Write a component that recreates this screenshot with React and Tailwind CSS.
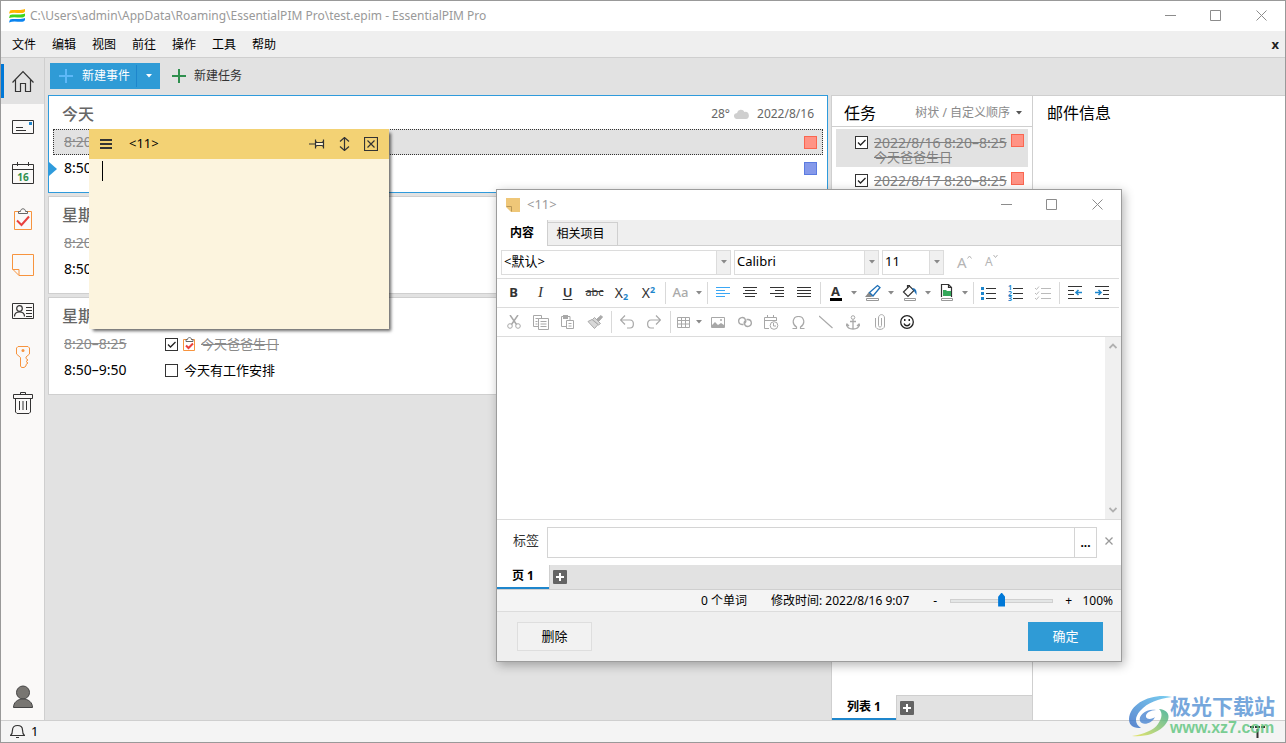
import { useState } from 'react'

const days = [
  { title: '今天', today: true },
  { title: '星期三' },
  { title: '星期四' }
]

const menuItems = ['文件', '编辑', '视图', '前往', '操作', '工具', '帮助']

const tasks = [
  { id: 1, time: '2022/8/16 8:20–8:25', title: '今天爸爸生日', selected: true },
  { id: 2, time: '2022/8/17 8:20–8:25', title: '今天爸爸生日' },
  { id: 3, time: '2022/8/18 8:20–8:25', title: '今天爸爸生日' }
]

function Svg({ w = 16, h = w, children, className = '' }) {
  return (
    <svg width={w} height={h} viewBox={`0 0 ${w} ${h}`} fill="none" stroke="currentColor" className={`shrink-0 ${className}`} aria-hidden="true">
      {children}
    </svg>
  )
}

const Caret = ({ className = 'text-[#8a8a8a]' }) => (
  <Svg w={6} h={4} className={className}>
    <path d="M0 0h6L3 3.5z" fill="currentColor" stroke="none" />
  </Svg>
)

const AppLogo = () => (
  <Svg w={16} h={14}>
    <g stroke="none">
      <path d="M1 1.5C5 0 11 2 16 0v2.5c-1 1.5-2 1.5-4 1.5C8 4 4 3 0 4.500z" fill="#ffb400" />
      <path d="M1 6C5 4.500 11 6.500 16 4.500V7c-1 1.5-2 1.5-4 1.5C8 8.500 4 7.500 0 9z" fill="#3fd51f" />
      <path d="M1 10.500C5 9 11 11 16 9v2c-1 1.5-2 1.800-4 1.800-4 0-8-1-12 .7z" fill="#0a84f0" />
    </g>
  </Svg>
)

/* ---------- sidebar icons ---------- */

const HomeIcon = () => (
  <Svg w={22} className="text-[#333]">
    <path d="M.5 12.500 11 1.5l10.500 11M3.500 10v11.500h5v-8h5v8h5V10" strokeWidth="1.200" />
  </Svg>
)
const MailIcon = () => (
  <Svg w={22} className="text-[#333]">
    <path d="M.5 4.500h21v13H.5zM4 11.500h7M4 14.500h10" />
    <path d="M17 6h3v3h-3z" fill="#1e86cc" stroke="none" />
  </Svg>
)
const CalendarIcon = () => (
  <Svg w={22} h={24} className="text-[#333]">
    <path d="M.5 3.500h21v19H.5zM.5 8.500h21M5.500 1v4M16.500 1v4" />
    <text x="11" y="19.500" textAnchor="middle" fontSize="10" fontWeight="700" fill="#2f8f4e" stroke="none">16</text>
  </Svg>
)
const ClipIcon = () => (
  <Svg w={22} h={24}>
    <path d="M7 4.500H2.500v18h17v-18H15" stroke="#f7943e" />
    <path d="M6.500 6.500v-2h2c0-3.600 5-3.600 5 0h2v2z" stroke="#666" />
    <path d="m5 13.500 4.500 4.500L17 9.500" stroke="#e8403e" strokeWidth="2" />
  </Svg>
)
const NoteIcon = () => (
  <Svg w={22} className="text-[#f7943e]">
    <path d="M.5.5h21v21H7l-6.500-6.500zM.5 15.500H7v6" />
  </Svg>
)
const ContactIcon = () => (
  <Svg w={22} className="text-[#333]">
    <path d="M.5 3.500h21v15H.5zM14 7.500h6M14 10.500h6M14 13.500h6M14 16.500h6" />
    <circle cx="7.500" cy="8.500" r="2.800" strokeWidth="1.200" />
    <path d="M2.500 16.500c0-3 2-4.500 5-4.500s5 1.5 5 4.500" strokeWidth="1.200" />
  </Svg>
)
const KeyIcon = () => (
  <Svg w={22} h={24} className="text-[#f7943e]">
    <path d="M6 1.500h10l1.500 1.500v6l-3.500 3v1.500l2 1.500-2 1.500 2 1.500-2 1.500v1.500l-2 1.500H9.500l-1-1.500V12.500l-4-3.500v-6z" />
    <circle cx="11" cy="5.500" r="1.500" fill="currentColor" stroke="none" />
  </Svg>
)
const TrashIcon = () => (
  <Svg w={22} h={24} className="text-[#333]">
    <path d="M1.500 3.500h19v4h-19zM8.500 3V1.500h5V3M3.500 8v13l1.500 1.500h12l1.500-1.500V8M7.500 10v9M11 10v9M14.500 10v9" />
  </Svg>
)
const UserIcon = () => (
  <Svg w={22} h={24}>
    <circle cx="11" cy="7.500" r="6.500" fill="#787672" stroke="#444" />
    <path d="M1.500 22.500c0-5 4-8.500 9.500-8.500s9.500 3.500 9.500 8.500z" fill="#787672" stroke="#444" />
  </Svg>
)

const sections = [
  { label: '今天', Icon: HomeIcon },
  { label: '邮件', Icon: MailIcon },
  { label: '日历', Icon: CalendarIcon },
  { label: '任务', Icon: ClipIcon },
  { label: '便笺', Icon: NoteIcon },
  { label: '联系人', Icon: ContactIcon },
  { label: '密码', Icon: KeyIcon },
  { label: '回收站', Icon: TrashIcon }
]

function Sidebar() {
  return (
    <nav className="flex w-11 shrink-0 flex-col border-r border-[#cfcfcf] bg-[#faf9f8]">
      {sections.map(({ label, Icon }, i) => (
        <button key={label} aria-label={label} className={`flex h-[46px] items-center gap-2 ${i === 0 ? 'bg-[#e2e2e2]' : ''}`}>
          <span className={`h-[34px] w-[3px] ${i === 0 ? 'bg-[#0078d7]' : ''}`} />
          <Icon />
        </button>
      ))}
      <button aria-label="帐户" className="mt-auto flex h-[46px] items-center pl-[11px]">
        <UserIcon />
      </button>
    </nav>
  )
}

/* ---------- shared bits ---------- */

function WindowButtons() {
  return (
    <div className="ml-auto flex h-full items-center pb-0.5 text-[#8c8c8c]">
      <button aria-label="最小化" className="flex w-[45px] justify-center"><Svg w={11}><path d="M0 5.500h11" /></Svg></button>
      <button aria-label="最大化" className="flex w-[45px] justify-center"><Svg w={11}><path d="M.5.5h10v10H.5z" /></Svg></button>
      <button aria-label="关闭" className="flex w-[47px] justify-center"><Svg w={11}><path d="m.5.5 10 10M10.500.5l-10 10" /></Svg></button>
    </div>
  )
}

function Check({ label, checked }) {
  const [on, setOn] = useState(Boolean(checked))
  return (
    <span className="relative flex size-[13px] shrink-0">
      <input
        type="checkbox"
        aria-label={label}
        checked={on}
        onChange={() => setOn(!on)}
        className="size-[13px] appearance-none border border-[#333] bg-white"
      />
      {on && (
        <Svg w={13} className="pointer-events-none absolute inset-0 text-[#222]">
          <path d="m3 6.500 2.500 2.500L10.500 4" strokeWidth="1.300" />
        </Svg>
      )}
    </span>
  )
}

function AddTab({ label }) {
  return (
    <button aria-label={label} className="flex size-[14px] items-center justify-center rounded-[1px] bg-[#646464] text-white">
      <Svg w={8}><path d="M4 0v8M0 4h8" strokeWidth="2" /></Svg>
    </button>
  )
}

/* ---------- agenda ---------- */

function DayCard({ title, today }) {
  return (
    <article className={`relative border bg-white pb-[11px] ${today ? 'border-[#2f9bdc]' : 'border-[#cfcfcf]'}`}>
      {today && (
        <Svg w={9} h={14} className="absolute top-[66px] left-0 text-[#2f9bdc]"><path d="M0 0v14l8-7z" fill="currentColor" stroke="none" /></Svg>
      )}
      <header className="flex h-[33px] items-center justify-between px-[13px] pt-[3px] text-xs text-[#666]">
        <h2 className="text-base font-medium">{title}</h2>
        {today && (
          <p className="flex items-center gap-1">
            28°
            <Svg w={15} h={10} className="text-[#cfcfcf]">
              <path d="M4 10a3.500 3 0 0 1-1-6 4 4 0 0 1 7.500-1A3.500 3.500 0 0 1 12 10z" fill="currentColor" stroke="none" />
            </Svg>
            <span className="ml-1">2022/8/16</span>
          </p>
        )}
      </header>
      <ul className="px-1 text-[13px] leading-[26px]">
        <li className={`flex h-[26px] items-center pl-[11px] text-[#8a8a8a] ${today ? 'bg-[#e2e2e2] outline-1 -outline-offset-1 outline-dotted outline-[#333]' : ''}`}>
          <time className="w-[101px] text-sm line-through">8:20–8:25</time>
          <Check label="今天爸爸生日" checked />
          <Svg w={13} h={15} className="mx-[5px]">
            <path d="M4 2.500H.5v11h11v-11H8" stroke="#f7943e" />
            <path d="M3 4.500v-2h1.500c0-2.600 4-2.600 4 0H10v2z" stroke="#666" />
            <path d="m3 8.500 2.500 2.500L10 6.500" stroke="#e8403e" strokeWidth="2" />
          </Svg>
          <span className="line-through">今天爸爸生日</span>
          {today && <span className="mr-1.5 ml-auto size-[13px] border border-[#fa6650] bg-[#ff9385]" />}
        </li>
        <li className="flex h-[26px] items-center pl-[11px] text-black">
          <time className="w-[101px] text-sm">8:50–9:50</time>
          <Check label="今天有工作安排" />
          <span className="ml-1.5">今天有工作安排</span>
          {today && <span className="mr-1.5 ml-auto size-[13px] border border-[#5b7be0] bg-[#8599ea]" />}
        </li>
      </ul>
    </article>
  )
}

/* ---------- tasks ---------- */

function TasksPanel() {
  return (
    <section className="flex w-[202px] shrink-0 flex-col overflow-hidden border-x border-t border-[#cfcfcf] bg-white">
      <header className="flex h-[31px] shrink-0 items-center justify-between border-b border-[#cfcfcf] pt-1 pr-[10px] pl-3">
        <h2 className="text-base">任务</h2>
        <button className="flex items-center gap-1.5 text-xs text-[#8a8a8a]">
          树状 / 自定义顺序 <Caret className="text-[#555]" />
        </button>
      </header>
      <ul className="min-h-0 flex-1 overflow-hidden px-1 pt-0.5 text-[#808080]">
        {tasks.map((t) => (
          <li key={t.id} className={`flex h-[38px] gap-1.5 pt-[7px] pr-1 pl-[19px] ${t.selected ? 'bg-[#e2e2e2]' : ''}`}>
            <Check label={`${t.time} ${t.title}`} checked />
            <div className="-mt-px flex-1 text-[13px] leading-[15px] whitespace-nowrap line-through">
              <p className="text-sm leading-[15px]">{t.time}</p>
              <p>{t.title}</p>
            </div>
            <span className="-mt-0.5 mr-0.5 -ml-0.5 size-[13px] shrink-0 border border-[#fa6650] bg-[#ff9385]" />
          </li>
        ))}
      </ul>
      <footer className="flex h-[25px] shrink-0 bg-[#e2e2e2]">
        <button className="h-full w-16 border-b-2 border-[#1e86cc] bg-white text-xs font-bold">列表 1</button>
        <div className="flex flex-1 items-center border-t border-l border-[#cfcfcf] pl-[3px]">
          <AddTab label="新建列表" />
        </div>
      </footer>
    </section>
  )
}

/* ---------- sticky note ---------- */

function StickyNote() {
  return (
    <section className="absolute top-32 left-[88px] flex h-[200px] w-[300px] flex-col bg-[#fcf4de] shadow-[3px_3px_3px_-1px_rgba(0,0,0,0.6)]">
      <header className="flex h-[30px] shrink-0 items-center bg-[#f3d274] px-[11px] text-[#333]">
        <button aria-label="菜单"><Svg w={12}><path d="M0 2h12M0 6h12M0 10h12" strokeWidth="2" /></Svg></button>
        <h3 className="ml-[17px] text-[13px] text-black">&lt;11&gt;</h3>
        <div className="ml-auto flex items-center gap-[14px]">
          <button aria-label="固定">
            <Svg w={16} h={14}><path d="M7 5.500h7v3H7z" fill="#fff3cf" stroke="none" /><path d="M0 7h6M6.500 2.500v9M14.500 2.500v9M6.500 4.500 8 5.500h5l1.500-1M6.500 9.500 8 8.500h5l1.500 1" strokeWidth="1.200" /></Svg>
          </button>
          <button aria-label="展开">
            <Svg w={11} h={14}><path d="M5.500 1v12M1 4.500l4.500-4 4.500 4M1 9.500l4.500 4 4.500-4" strokeWidth="1.200" /></Svg>
          </button>
          <button aria-label="关闭">
            <Svg w={14}><path d="M.5.5h13v13H.5zM3.500 3.500l7 7M10.500 3.500l-7 7" strokeWidth="1.200" /></Svg>
          </button>
        </div>
      </header>
      <div className="relative flex-1">
        <textarea aria-label="便笺内容" className="block size-full resize-none bg-transparent p-3 outline-none" />
        <span className="absolute top-0.5 left-[13px] h-5 w-px bg-black" />
      </div>
    </section>
  )
}

/* ---------- note editor window ---------- */

function Tool({ label, className = '', children }) {
  return (
    <button aria-label={label} className={`flex h-full w-[27px] items-center justify-center ${className}`}>
      {children}
    </button>
  )
}

const More = () => (
  <button aria-label="更多" className="flex h-full w-[10px] items-center justify-center"><Caret /></button>
)

const Sep = () => <span className="mr-px ml-[3px] h-[22px] w-px bg-[#d9d9d9]" />

function Combo({ label, value, className }) {
  return (
    <div className={`flex h-[25px] border border-[#dcdcdc] ${className}`}>
      <select aria-label={label} className="min-w-0 flex-1 appearance-none bg-white pl-0.5 text-[13px] text-black outline-none">
        <option>{value}</option>
      </select>
      <span className="flex w-[14px] items-center justify-center border-l border-[#dcdcdc] bg-[#f0f0f0]"><Caret /></span>
    </div>
  )
}

const Lines = ({ rows, className = 'text-[#333]' }) => (
  <Svg w={14} h={11} className={className}>
    {rows.map(([a, b], i) => <path key={i} d={`M${a} ${i * 3 + 0.5}H${b}`} />)}
  </Svg>
)

function FormatRow() {
  return (
    <div className="mr-0.5 flex h-[29px] items-center border-b border-[#dcdcdc] pb-px pl-[3px] text-[#333]">
      <Tool label="粗体"><b className="text-[13px]">B</b></Tool>
      <Tool label="斜体"><i className="font-['Liberation_Serif',serif] text-[15px]">I</i></Tool>
      <Tool label="下划线"><span className="text-[13px] font-semibold underline underline-offset-2">U</span></Tool>
      <Tool label="删除线"><span className="text-[11px] line-through">abc</span></Tool>
      <Tool label="下标"><span className="text-sm">X<sub className="text-[9px] font-bold text-[#1e86cc]">2</sub></span></Tool>
      <Tool label="上标"><span className="text-sm">X<sup className="text-[9px] font-bold text-[#1e86cc]">2</sup></span></Tool>
      <Sep />
      <Tool label="大小写"><span className="text-[13px] font-medium text-[#aaa]">Aa</span></Tool>
      <More />
      <Sep />
      <Tool label="左对齐"><Lines className="text-[#3aa7f5]" rows={[[0, 14], [0, 9], [0, 14], [0, 9]]} /></Tool>
      <Tool label="居中"><Lines rows={[[0, 14], [2, 12], [0, 14], [2, 12]]} /></Tool>
      <Tool label="右对齐"><Lines rows={[[0, 14], [5, 14], [0, 14], [5, 14]]} /></Tool>
      <Tool label="两端对齐"><Lines rows={[[0, 14], [0, 14], [0, 14], [0, 14]]} /></Tool>
      <Sep />
      <Tool label="文字颜色">
        <span className="w-3 border-b-[3px] border-black text-center text-[13px] leading-[14px] font-bold">A</span>
      </Tool>
      <More />
      <Tool label="突出显示">
        <Svg w={16} h={17}>
          <path d="M1.500 14.500h12v2h-12z" stroke="#999" />
          <path d="m0 13 4-5 4 4-2 1z" fill="#888" stroke="none" />
          <path d="m4.500 8.500 8-7 2.500 2-7 8.500z" fill="#fff" stroke="#1e70b8" strokeWidth="1.300" />
        </Svg>
      </Tool>
      <More />
      <Tool label="背景颜色">
        <Svg w={16} h={17}>
          <path d="M2.500 14.500h11v2h-11z" stroke="#999" />
          <path d="m1.500 8 6-6 4.500 4.500-6 6zM5.500 4V1.500H8" strokeWidth="1.200" />
          <path d="M10 4c4 0 5 3 4.500 7-1-2-2-3-2.500-4z" fill="#1e70b8" stroke="none" />
        </Svg>
      </Tool>
      <More />
      <Tool label="页面颜色">
        <Svg w={14} h={17}>
          <path d="M1.500 14.500h11v2h-11z" stroke="#999" />
          <path d="M1.500 13V.5h7l3 3V13M8.500.5v3h3" strokeWidth="1.200" />
          <path d="M3 6h3l1 1h4v5H3z" fill="#35a85a" stroke="none" />
        </Svg>
      </Tool>
      <More />
      <Sep />
      <Tool label="项目符号">
        <Svg w={15} h={14}>
          <path d="M5 2.500h10M5 7.500h10M5 12.500h10" />
          <path d="M0 1h3v3H0zM0 6h3v3H0zM0 11h3v3H0z" fill="#1e86cc" stroke="none" />
        </Svg>
      </Tool>
      <Tool label="编号">
        <Svg w={15} h={20}>
          <path d="M5 5.500h10M5 10.500h10M5 15.500h10" />
          <g fill="#1e86cc" stroke="none" fontSize="7" fontWeight="700">
            <text x="0" y="7">1</text>
            <text x="0" y="13">2</text>
            <text x="0" y="18">3</text>
          </g>
        </Svg>
      </Tool>
      <Tool label="检查列表">
        <Svg w={16} h={14} className="text-[#bbb]">
          <path d="M6 2.500h10M6 7.500h10M6 12.500h10M0 2l1.500 1.500L4 .5M0 7l1.500 1.500L4 5.500M0 12l1.500 1.500L4 10.500" />
        </Svg>
      </Tool>
      <Sep />
      <Tool label="减少缩进">
        <Svg w={14} h={13}>
          <path d="M0 .5h14M0 4.500h6M0 8.500h6M0 12.500h14" />
          <path d="M8 6.500h6M10.500 4 8 6.500 10.500 9" stroke="#1e86cc" strokeWidth="1.600" />
        </Svg>
      </Tool>
      <Tool label="增加缩进">
        <Svg w={14} h={13}>
          <path d="M0 .5h14M8 4.500h6M8 8.500h6M0 12.500h14" />
          <path d="M0 6.500h6M3.500 4 6 6.500 3.500 9" stroke="#1e86cc" strokeWidth="1.600" />
        </Svg>
      </Tool>
    </div>
  )
}

function InsertRow() {
  return (
    <div className="flex h-[29px] items-center border-b border-[#dcdcdc] pl-[3px] text-[#a8a8a8]">
      <Tool label="剪切">
        <Svg w={14}>
          <path d="m3 0 6.500 9.500M11 0 4.500 9.500" strokeWidth="1.500" />
          <circle cx="3" cy="11" r="2.300" /><circle cx="11" cy="11" r="2.300" />
        </Svg>
      </Tool>
      <Tool label="复制">
        <Svg w={16} h={15}>
          <path d="M5 11.500H.5V.5h8V3M2.500 3.500h3M2.500 6.500h2M2.500 9h2" />
          <path d="M5.500 3.500h10v11h-10zM7.500 6.500h6M7.500 9h6M7.500 11.500h6" />
        </Svg>
      </Tool>
      <Tool label="粘贴">
        <Svg w={13} h={14}>
          <path d="M5 11.500H.5v-10H9V5" /><path d="M2 0h5v4H2z" fill="currentColor" stroke="none" />
          <path d="M5.500 5.500h7v8h-7zM7.500 8.500h3M7.500 11h3" />
        </Svg>
      </Tool>
      <Tool label="格式刷">
        <Svg w={16} h={14}>
          <path d="m10 4 4-3.500L15.500 2 12 6z" fill="currentColor" />
          <path d="m7.500 2.500 6 6-2 1.500-6-5.500z" fill="#d8d8d8" />
          <path d="M5 4.500 1 6.500l6.500 7 3.500-4z" fill="#d8d8d8" />
        </Svg>
      </Tool>
      <Sep />
      <Tool label="撤消"><Svg w={14}><path d="M5 .5.5 5 5 9.500M.5 5H10c4.500 0 4.500 8 0 8H7" strokeWidth="1.200" /></Svg></Tool>
      <Tool label="重做"><Svg w={14}><path d="M9 .5 13.500 5 9 9.500M13.500 5H4c-4.500 0-4.500 8 0 8h3" strokeWidth="1.200" /></Svg></Tool>
      <Sep />
      <Tool label="表格" className="max-w-[22px]">
        <Svg w={13} h={11}><path d="M.5.5h12v10H.5zM.5 3.500h12M.5 7h12M4.500.5v10M8.500.5v10" /></Svg>
      </Tool>
      <More />
      <Tool label="图片">
        <Svg w={14} h={11}><path d="M.5.5h13v10H.5z" /><path d="m1 8 3-3 3 3 3-2 3 2v2H1z" fill="currentColor" stroke="none" /><circle cx="10" cy="3" r="1" fill="currentColor" stroke="none" /></Svg>
      </Tool>
      <Tool label="链接">
        <Svg w={14} h={12}>
          <path d="M5.500 8.500H4A3.500 3.500 0 1 1 7.500 4c.8 1.500 0 3-1 3.500M8.500 3.500H10A3.500 3.500 0 1 1 6.500 8c-.8-1.500 0-3 1-3.500" strokeWidth="1.300" />
        </Svg>
      </Tool>
      <Tool label="日期时间">
        <Svg w={15} h={15}>
          <path d="M5 13.500H.5v-11h12V6M.5 5.500h12M3.500 0v3M9.500 0v3" /><circle cx="10" cy="10.500" r="3.800" /><path d="M9.500 8v3H12" />
        </Svg>
      </Tool>
      <Tool label="符号">
        <Svg w={13} h={13}><path d="M.5 12.500h4V11C-1 7.500 1 .5 6.500.5S14 7.500 8.500 11v1.500h4" strokeWidth="1.200" /></Svg>
      </Tool>
      <Tool label="线条"><Svg w={14}><path d="m0 1 13.500 12" strokeWidth="1.200" /></Svg></Tool>
      <Tool label="书签">
        <Svg w={14} h={15}>
          <circle cx="7" cy="2.500" r="1.800" /><path d="M7 4.500V14M4 6.500h6M.8 10c.4 3 3 4 6.200 4s5.800-1 6.200-4M0 11l1-2 2 2M14 11l-1-2-2 2" strokeWidth="1.300" />
        </Svg>
      </Tool>
      <Tool label="附件">
        <Svg w={10} h={16}><path d="M6.500 4v7.500c0 2-3 2-3 0V4M.5 4v8c0 4.500 9 4.500 9 0V4c0-4.500-6-4.500-6 0" /></Svg>
      </Tool>
      <Tool label="表情" className="text-[#222]">
        <Svg w={14}>
          <circle cx="7" cy="7" r="6.300" strokeWidth="1.300" /><path d="M4 8.500c1 3 5 3 6 0" strokeWidth="1.300" />
          <path d="M4 4h1.500v2H4zM8.500 4H10v2H8.500z" fill="currentColor" stroke="none" />
        </Svg>
      </Tool>
    </div>
  )
}

function NoteEditor() {
  const [zoom, setZoom] = useState(100)
  return (
    <section className="absolute top-[188px] left-[495px] flex w-[626px] flex-col border border-[#9c9c9c] bg-white shadow-[2px_3px_10px_rgba(0,0,0,0.3)]">
      <header className="flex h-[30px] items-center pl-[9px]">
        <Svg w={14}>
          <path d="M0 0h14v14H5L0 9z" fill="#efc778" stroke="none" />
          <path d="M.5 8.500h5v5" stroke="#b99655" />
        </Svg>
        <h3 className="ml-[7px] text-[13px] text-[#999]">&lt;11&gt;</h3>
        <WindowButtons />
      </header>

      <div className="flex h-[26px] items-end bg-[#efefef] text-xs text-black">
        <button className="h-full w-[51px] border-r border-[#cfcfcf] bg-white font-bold">内容</button>
        <button className="h-6 w-[70px] border-t border-r border-b border-[#cfcfcf] pr-1">相关项目</button>
        <span className="flex-1 border-b border-[#cfcfcf]" />
      </div>

      <div className="mr-0.5 flex h-[33px] items-center gap-[3px] border-b border-[#dcdcdc] pl-1">
        <Combo label="样式" value="<默认>" className="w-[230px]" />
        <Combo label="字体" value="Calibri" className="w-[145px]" />
        <Combo label="字号" value="11" className="w-[62px]" />
        <div className="flex items-center gap-[13px] pl-2.5 text-[#b5b5b5]">
          <button aria-label="增大字号" className="flex w-[15px] text-[15px]">A<Svg w={5} h={5} className="mt-1"><path d="M.5 3.500 2.500 1l2 2.500" /></Svg></button>
          <button aria-label="减小字号" className="flex w-[15px] text-xs">A<Svg w={5} h={5}><path d="M.5 1l2 2.500L4.500 1" /></Svg></button>
        </div>
      </div>
      <FormatRow />
      <InsertRow />

      <div className="flex h-[183px] border-b border-[#dcdcdc]">
        <textarea aria-label="内容" className="flex-1 resize-none p-2 outline-none" />
        <div className="flex w-4 flex-col items-center justify-between bg-[#f0f0f0] py-1.5 text-[#b0b0b0]">
          <Svg w={8} h={6}><path d="m.5 5 3.500-3.500L7.500 5" strokeWidth="1.800" /></Svg>
          <Svg w={8} h={6}><path d="m.5 1 3.500 3.500L7.500 1" strokeWidth="1.800" /></Svg>
        </div>
      </div>

      <div className="flex h-[45px] items-center pl-4 text-[13px] text-[#333]">
        <label htmlFor="tags" className="w-[34px] pb-1">标签</label>
        <input id="tags" className="h-[31px] min-w-0 flex-1 border border-[#d4d4d4] px-1.5 outline-none" />
        <button aria-label="选择标签" className="flex h-[31px] w-[22px] items-center justify-center border border-l-0 border-[#d4d4d4] text-xs font-bold text-black">...</button>
        <button aria-label="清除标签" className="flex w-6 justify-center pb-1 text-[#999]"><Svg w={8}><path d="m.5.5 7 7M7.500.5l-7 7" strokeWidth="1.300" /></Svg></button>
      </div>

      <div className="flex h-[25px] border-b border-[#cfcfcf] bg-[#e2e2e2]">
        <button className="h-full w-[52px] border-b-2 border-[#1e86cc] bg-white text-xs font-bold text-black">页 1</button>
        <div className="flex items-center border-l border-[#cfcfcf] pl-[3px]"><AddTab label="新建页" /></div>
      </div>

      <div className="flex h-[22px] items-center border-b border-[#dcdcdc] bg-[#f4f4f4] pr-2 text-xs text-black">
        <span className="ml-auto">0 个单词</span>
        <span className="ml-6">修改时间: 2022/8/16 9:07</span>
        <button aria-label="缩小" className="ml-6">-</button>
        <input
          type="range"
          aria-label="缩放"
          min="0"
          max="200"
          value={zoom}
          onChange={(e) => setZoom(Number(e.target.value))}
          className="mr-3 ml-[13px] h-4 w-[103px] appearance-none bg-transparent [&::-webkit-slider-runnable-track]:h-1 [&::-webkit-slider-runnable-track]:border [&::-webkit-slider-runnable-track]:border-[#d0d0d0] [&::-webkit-slider-runnable-track]:bg-[#e4e6e6] [&::-webkit-slider-thumb]:-mt-[7px] [&::-webkit-slider-thumb]:h-3.5 [&::-webkit-slider-thumb]:w-[7px] [&::-webkit-slider-thumb]:appearance-none [&::-webkit-slider-thumb]:bg-[#0078d7] [&::-webkit-slider-thumb]:[clip-path:polygon(50%_0,100%_30%,100%_100%,0_100%,0_30%)]"
        />
        <button aria-label="放大">+</button>
        <output className="ml-[9px] w-8 text-right">{zoom}%</output>
      </div>

      <footer className="flex h-[49px] items-center justify-between bg-[#efefef] pr-[18px] pl-5 text-[13px]">
        <button className="h-[29px] w-[75px] border border-[#dedede] bg-[#f2f2f2] text-black">删除</button>
        <button className="h-[29px] w-[75px] bg-[#2f9bd6] text-white">确定</button>
      </footer>
    </section>
  )
}

function SiteBadge() {
  return (
    <aside className="pointer-events-none absolute right-2.5 bottom-1 flex items-center opacity-80">
      <Svg w={44} h={42}>
        <defs>
          <linearGradient id="swirlTop" x1="1" y1="0" x2="0" y2="1">
            <stop offset="0" stopColor="#58c3ee" /><stop offset="1" stopColor="#3569c4" />
          </linearGradient>
          <linearGradient id="swirlBottom" x1="1" y1="0" x2="0" y2="1">
            <stop offset="0" stopColor="#2fa98c" /><stop offset="1" stopColor="#e6e34c" />
          </linearGradient>
        </defs>
        <g stroke="none">
          <path d="M44 2C24-2 2 8 1 24c0 8 6 9 12 9-6-4-7-10-1-17C20 7 30 4 44 2z" fill="url(#swirlTop)" />
          <path d="M31 14c12 1 12 11 4 18-8 7-18 10-31 9 12-2 22-6 26-12 4-6 5-11 1-15z" fill="url(#swirlBottom)" />
          <path d="M28 15c-9-2-18 5-16 11 2 5 12 3 15-4-2 2-8 3-9 0-1-4 5-7 10-7z" fill="#4a86d2" />
        </g>
      </Svg>
      <div className="-ml-0.5 font-bold">
        <p className="text-[21px] leading-6 text-[#5492d4]">极光下载站</p>
        <p className="font-['Liberation_Sans',sans-serif] text-base leading-5 text-[#5cc47c]">www.xz7.com</p>
      </div>
    </aside>
  )
}

export default function App() {
  return (
    <div className="relative flex h-screen flex-col overflow-hidden border border-[#999] bg-[#e2e2e2] font-['Noto_Sans','Noto_Sans_CJK_SC',sans-serif] text-black">
      <header className="flex h-[30px] shrink-0 items-center bg-white pl-2">
        <AppLogo />
        <h1 className="ml-[5px] text-xs text-[#999]">C:\Users\admin\AppData\Roaming\EssentialPIM Pro\test.epim - EssentialPIM Pro</h1>
        <WindowButtons />
      </header>

      <nav className="flex h-[27px] shrink-0 items-center gap-4 border-b border-[#cfcfcf] bg-[#efefef] pt-0.5 pl-[11px] text-xs">
        {menuItems.map((item) => <button key={item}>{item}</button>)}
        <button aria-label="关闭文档" className="mr-1.5 ml-auto text-[13px] font-bold text-[#222]">x</button>
      </nav>

      <div className="flex min-h-0 flex-1">
        <Sidebar />
        <main className="flex min-w-0 flex-1 flex-col">
          <div className="flex h-[37px] shrink-0 items-start gap-3 pt-[5px] pl-[5px] text-xs">
            <div className="flex h-[26px] items-center bg-[#2f9bd6] text-white">
              <button className="flex h-full items-center gap-[9px] pr-1.5 pl-[9px]">
                <Svg w={14} className="text-[#5db8f8]"><path d="M7 0v14M0 7h14" strokeWidth="2" /></Svg>
                新建事件
              </button>
              <button aria-label="更多新建选项" className="flex h-[22px] w-6 items-center justify-center border-l border-[#1e86cc]"><Caret className="text-white" /></button>
            </div>
            <button className="flex h-[26px] items-center gap-2 text-[#333]">
              <Svg w={14} className="text-[#2f8f4e]"><path d="M7 0v14M0 7h14" strokeWidth="2" /></Svg>
              新建任务
            </button>
          </div>

          <div className="flex min-h-0 flex-1">
            <section className="flex min-w-0 flex-1 flex-col gap-[3px] px-[3px]">
              {days.map((day) => <DayCard key={day.title} {...day} />)}
            </section>
            <TasksPanel />
            <section className="w-[252px] shrink-0 border-t border-[#cfcfcf] bg-white px-3.5 pt-[5px]">
              <h2 className="text-base">邮件信息</h2>
            </section>
          </div>
        </main>
      </div>

      <footer className="flex h-[22px] shrink-0 items-center gap-1.5 border-t border-[#cfcfcf] bg-[#f4f4f4] pr-5 pl-[9px] text-[13px]">
        <Svg w={15} className="text-[#333]">
          <path d="M.5 11.500c2-1.500 2-3 2-5.500 0-3 2-4.500 5-4.500s5 1.500 5 4.500c0 2.500 0 4 2 5.500zM6 13.500h3" strokeWidth="1.200" />
        </Svg>
        1
        <Svg w={15} h={13} className="ml-auto text-[#333]"><path d="M0 2h4M5 2h5M11 2h4M7.500 4v9" strokeWidth="2" /></Svg>
      </footer>

      <StickyNote />
      <NoteEditor />
      <SiteBadge />
    </div>
  )
}
